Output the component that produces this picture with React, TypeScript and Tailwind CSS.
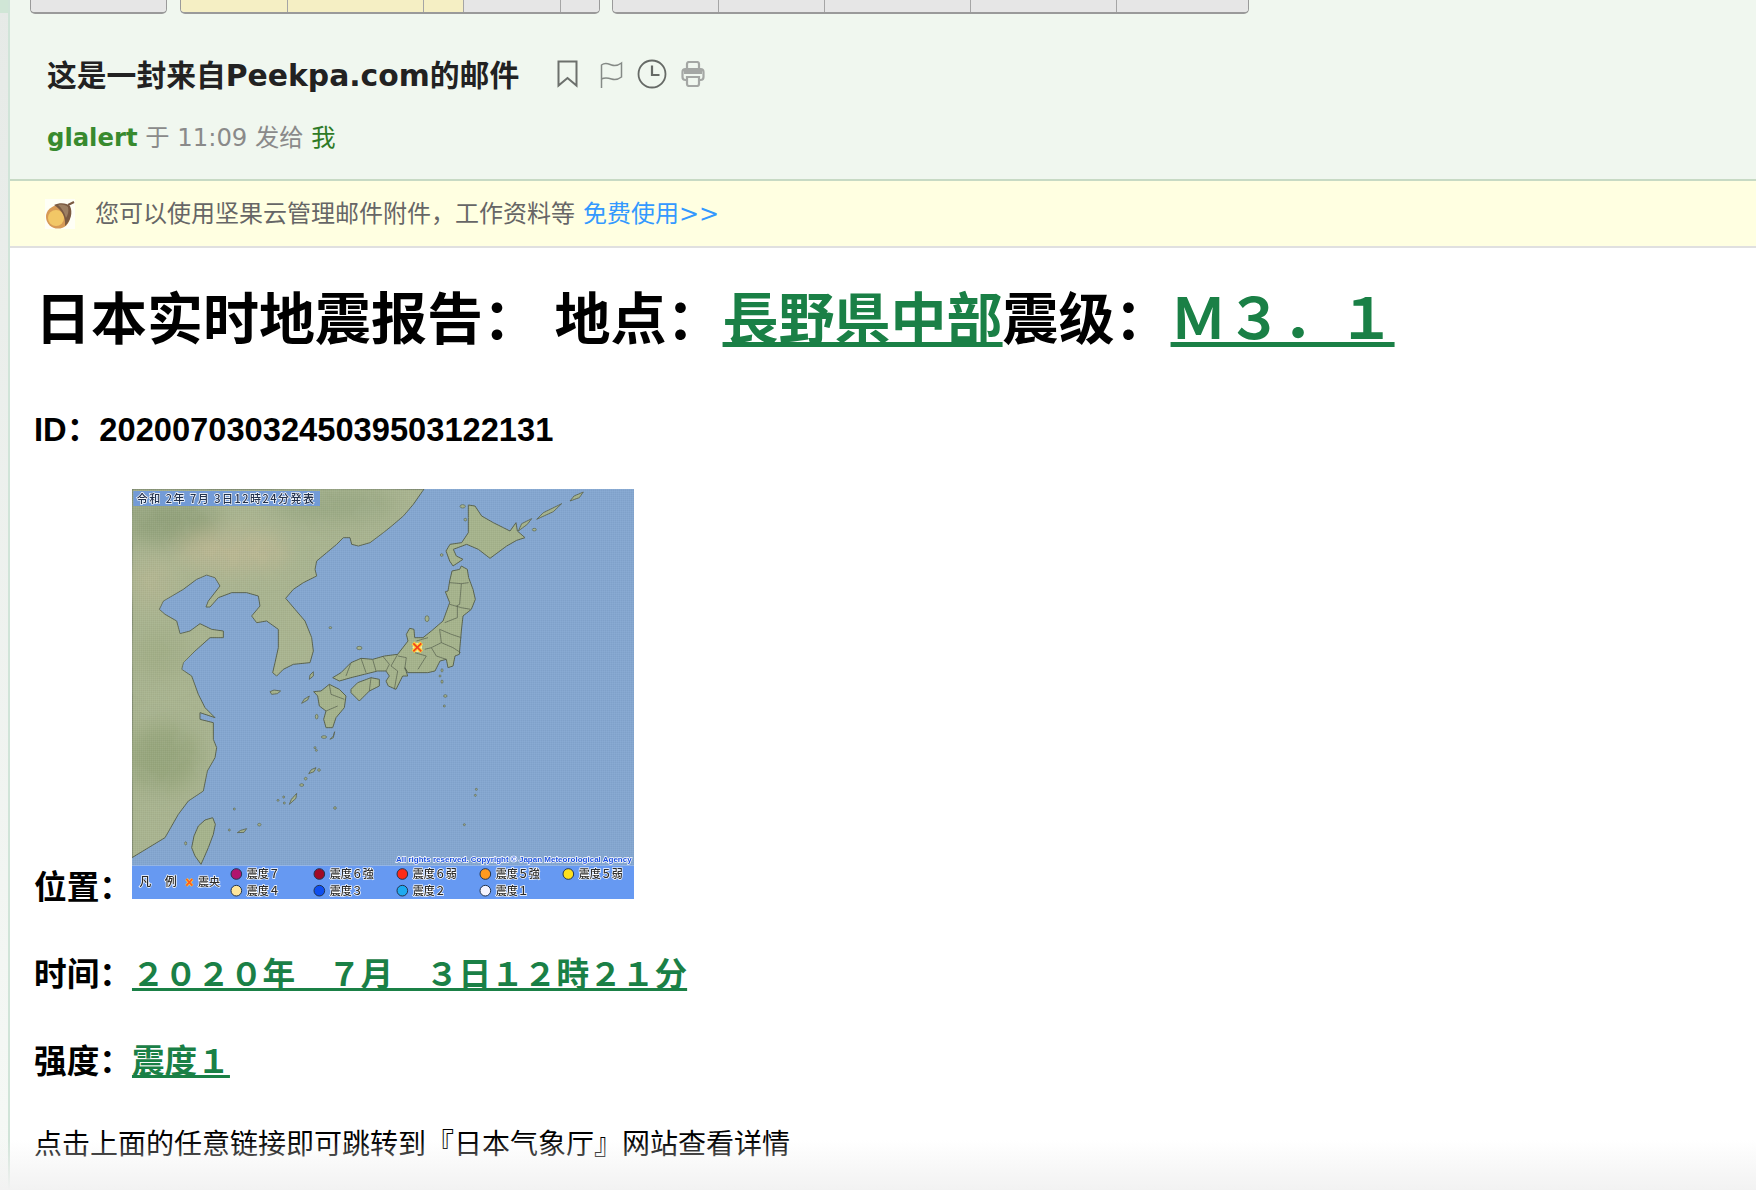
const FONT = "font-['Liberation_Sans','Noto_Sans_CJK_SC',sans-serif]";
const HEAD_FONT = "font-['DejaVu_Sans','Noto_Sans_CJK_SC',sans-serif]";

function Toolbar() {
  const groups = [
    { w: "w-[137px]", cells: [{ w: "flex-1" }] },
    {
      w: "w-[420px]",
      cells: [
        { w: "w-[107px]", on: true },
        { w: "w-[136px]", on: true },
        { w: "w-[40px]", on: true },
        { w: "w-[97px]" },
        { w: "flex-1" },
      ],
    },
    {
      w: "w-[637px] -ml-px",
      cells: [
        { w: "w-[106px]" },
        { w: "w-[106px]" },
        { w: "w-[146px]" },
        { w: "w-[146px]" },
        { w: "flex-1" },
      ],
    },
  ];
  return (
    <div className="flex gap-[13px] pl-[20px] h-[14px]">
      {groups.map((g, i) => (
        <div
          key={i}
          className={`${g.w} flex overflow-hidden rounded-b-[5px] border border-t-0 border-[#9a9a9a] border-b-2`}
        >
          {g.cells.map((c, j) => (
            <div
              key={j}
              className={`${c.w} h-full border-r border-[#a5a5a5] last:border-r-0 ${
                c.on ? "bg-[#f5efc4]" : "bg-[#e6e6e6]"
              }`}
            />
          ))}
        </div>
      ))}
    </div>
  );
}

function HeaderIcons() {
  return (
    <div className="flex items-center ml-[38px] -mt-[3px]">
      <svg width="21" height="28" viewBox="0 0 21 28" fill="none" stroke="#6c706c" strokeWidth="2">
        <path d="M1.500 1.500h18v24l-9-7.500-9 7.500z" />
      </svg>
      <svg className="ml-[22px]" width="23" height="27" viewBox="0 0 23 27" fill="none" stroke="#858a86" strokeWidth="1.500">
        <path d="M1.500 27V4c4-3 7-1 10 0 3 1 6 1 10-2v14c-4 3-7 3-10 2-3-1-6-2-10 0" />
      </svg>
      <svg className="ml-[14px]" width="30" height="30" viewBox="0 0 30 30" fill="none" stroke="#666a66" strokeWidth="1.800">
        <circle cx="15" cy="15" r="13.500" />
        <path d="M15 6.500v9.500h7.500" strokeWidth="2.200" />
      </svg>
      <svg className="ml-[14px]" width="24" height="26" viewBox="0 0 24 26" fill="none" stroke="#a4a7a4" strokeWidth="2.200">
        <path d="M6 8V3a2 2 0 0 1 2-2h8a2 2 0 0 1 2 2v5" />
        <rect x="1.500" y="8" width="21" height="11" rx="3" />
        <rect x="3" y="9" width="18" height="4" fill="#a4a7a4" stroke="none" />
        <path d="M6 16v7a2 2 0 0 0 2 2h8a2 2 0 0 0 2-2v-7z" fill="#f0f7ef" />
      </svg>
    </div>
  );
}

function Acorn() {
  return (
    <svg width="30" height="30" viewBox="0 0 30 30">
      <rect width="30" height="30" fill="#fffff6" />
      <ellipse cx="13" cy="18" rx="12" ry="11.500" fill="#d79a55" />
      <ellipse cx="11" cy="19" rx="8" ry="8" fill="#f2c766" />
      <path d="M9 6c6-3 13-2 16 1 3 6 1 15-5 20 1-9-3-16-11-21z" fill="#7a5a42" />
      <path d="M13 6c4-1 8 0 10 2 1 4 0 8-2 11-2-6-4-10-8-13z" fill="#9c7f62" />
      <path d="M23 6l6-3" stroke="#7a5a42" strokeWidth="2" />
    </svg>
  );
}

const COAST = "#596350";

const LEGEND = [
  { cx: 349, cy: 1179, fill: "#b0146e", label: "震度７" },
  { cx: 598, cy: 1179, fill: "#a00a26", label: "震度６強" },
  { cx: 847, cy: 1179, fill: "#ff2b17", label: "震度６弱" },
  { cx: 1096, cy: 1179, fill: "#ff9a1e", label: "震度５強" },
  { cx: 1345, cy: 1179, fill: "#ffe01e", label: "震度５弱" },
  { cx: 349, cy: 1229, fill: "#ffe69b", label: "震度４" },
  { cx: 598, cy: 1229, fill: "#0f4ff0", label: "震度３" },
  { cx: 847, cy: 1229, fill: "#1eaaf0", label: "震度２" },
  { cx: 1096, cy: 1229, fill: "#f4f4ff", label: "震度１" },
];

const SMALL_ISLANDS = [
  [631, 440, 4, 3], [718, 501, 8, 5], [921, 413, 6, 9], [965, 222, 4, 4], [1036, 116, 4, 4], [1243, 146, 6, 4],
  [1028, 76, 8, 5], [966, 568, 3, 5], [960, 585, 3, 3], [966, 602, 3, 5], [976, 645, 5, 4], [973, 675, 3, 3],
  [597, 867, 4, 4], [557, 893, 4, 4], [545, 912, 6, 4], [491, 948, 3, 3], [474, 958, 3, 3], [493, 966, 3, 3],
  [645, 981, 4, 4], [1069, 925, 3, 3], [1066, 943, 3, 3], [1033, 1031, 3, 3], [418, 1031, 5, 4], [328, 1047, 3, 3],
  [197, 1087, 3, 5], [343, 984, 3, 3], [590, 707, 4, 7], [612, 768, 8, 4], [585, 800, 3, 3], [589, 808, 3, 3],
];

const MAINLAND =
  "36,24 912,24 880,70 850,105 815,135 790,155 750,185 715,195 695,190 690,170 670,170 650,190 620,215 590,240 585,265 590,285 550,305 520,325 497,352 525,385 555,420 575,470 580,510 570,545 520,550 490,565 470,585 458,575 465,545 475,500 475,445 440,420 410,425 395,405 420,375 415,345 380,335 335,335 295,350 270,378 258,378 265,360 300,315 285,290 260,282 230,295 190,325 130,360 118,385 135,400 170,420 180,458 210,450 240,428 275,445 310,450 310,470 270,470 225,510 190,545 185,565 215,585 235,640 255,680 285,710 240,695 240,715 280,725 280,775 290,800 285,830 262,870 250,930 205,960 175,1000 135,1070 36,1130";
const HOKKAIDO =
  "1045,72 1065,75 1085,105 1120,125 1150,140 1170,150 1188,125 1192,150 1215,170 1190,178 1160,195 1110,232 1075,205 1040,190 1000,205 1009,225 1029,235 999,255 989,240 978,210 990,190 1025,185 1045,155 1045,110";
const HONSHU =
  "833,520 864,480 859,460 869,442 882,445 884,470 909,470 934,450 969,420 989,365 976,332 984,330 989,300 996,270 1019,265 1024,255 1042,265 1046,290 1059,325 1066,355 1054,385 1029,405 1024,450 1018,520 1005,525 999,555 984,560 979,535 960,540 945,570 923,575 888,575 863,575 855,560 863,585 848,585 828,625 805,615 798,600 808,585 798,570 773,570 733,580 693,590 658,600 638,590 663,575 693,545 723,532 758,535 793,525";
const SHIKOKU = "693,625 713,605 753,590 778,595 778,615 748,630 718,660 693,635";
const KYUSHU = "581,632 603,630 628,610 658,625 678,645 673,680 648,710 638,740 618,740 611,715 618,690 598,675 593,645";
const TAIWAN = "278,1010 286,1030 280,1060 265,1100 252,1130 243,1150 225,1125 215,1100 222,1065 235,1035 255,1017";

const BORDERS = [
  "989,305 1024,308 1046,305",
  "1024,308 1019,370 1009,375",
  "989,370 1024,380 1052,385",
  "1012,375 1012,410 974,425",
  "959,445 994,460 1024,470",
  "959,445 964,485 999,500 1022,515",
  "934,500 964,485",
  "914,505 934,500 949,525 979,535",
  "924,470 889,480",
  "884,515 919,525 894,565",
  "834,525 859,530 854,565",
  "788,525 808,550 798,570",
  "833,520 813,555 833,570 823,625",
  "723,532 738,575",
  "693,545 678,585",
  "758,535 768,570",
  "628,610 633,640 673,655",
  "618,690 653,675",
  "753,590 748,630",
];

const OTHER_ISLANDS = [
  "450,632 462,627 482,630 472,638 455,640",
  "568,595 570,582 580,572 580,585",
  "545,667 552,655 568,645 563,657",
  "630,775 640,765 644,752 640,770",
  "566,878 574,866 588,860 582,872",
  "508,970 514,955 530,937 528,952",
  "352,1055 362,1048 380,1043 372,1054",
  "1195,150 1205,128 1235,113 1222,130",
  "1250,115 1270,95 1325,68 1300,92",
  "1350,60 1362,45 1390,33 1378,50",
];

function QuakeMap() {
  return (
    <svg width="502" height="410" viewBox="36 24 1506 1230" className="block shrink-0">
      <defs>
        <pattern id="dots" width="6" height="6" patternUnits="userSpaceOnUse">
          <rect width="3" height="3" fill="#ffffff" opacity="0.05" />
          <rect x="3" y="3" width="3" height="3" fill="#000000" opacity="0.03" />
        </pattern>
        <filter id="soft" x="-5%" y="-5%" width="110%" height="110%">
          <feGaussianBlur stdDeviation="1" />
        </filter>
        <filter id="textSoft" x="-5%" y="-20%" width="110%" height="140%">
          <feGaussianBlur stdDeviation="0.800" />
        </filter>
        <filter id="hillBlur" x="-40%" y="-40%" width="180%" height="180%">
          <feGaussianBlur stdDeviation="32" />
        </filter>
        <filter id="terrain" x="0" y="0" width="100%" height="100%">
          <feTurbulence type="fractalNoise" baseFrequency="0.014" numOctaves="4" seed="7" />
          <feColorMatrix values="0 0 0 0 0.40  0 0 0 0 0.46  0 0 0 0 0.30  5 0 0 0 -2.300" />
        </filter>
        <clipPath id="mainlandClip">
          <polygon points={MAINLAND} />
        </clipPath>
      </defs>
      <rect x="36" y="24" width="1506" height="1130" fill="#84a6d0" />

      <g filter="url(#soft)" strokeLinejoin="round">
        {/* 大陆 */}
        <polygon points={MAINLAND} fill="#a9b490" stroke={COAST} strokeWidth="3" />
        <g clipPath="url(#mainlandClip)">
          <g filter="url(#hillBlur)">
            <ellipse cx="150" cy="120" rx="150" ry="70" fill="#93a27c" />
            <ellipse cx="640" cy="70" rx="190" ry="50" fill="#9aa984" />
            <ellipse cx="340" cy="210" rx="170" ry="60" fill="#bab793" />
            <ellipse cx="90" cy="300" rx="70" ry="70" fill="#b3b692" />
            <ellipse cx="130" cy="830" rx="110" ry="100" fill="#97a67d" />
            <ellipse cx="120" cy="520" rx="80" ry="70" fill="#a2ae87" />
          </g>
          <rect x="36" y="24" width="900" height="1110" filter="url(#terrain)" opacity="0.16" />
        </g>

        {/* 日本列岛 */}
        <g fill="#a5b38c" stroke={COAST} strokeWidth="3">
          <polygon points={HOKKAIDO} />
          <polygon points={HONSHU} />
          <polygon points={SHIKOKU} />
          <polygon points={KYUSHU} />
          <polygon points={TAIWAN} />
          {OTHER_ISLANDS.map((p) => (
            <polygon key={p} points={p} strokeWidth="2.500" />
          ))}
          {SMALL_ISLANDS.map(([cx, cy, rx, ry], i) => (
            <ellipse key={i} cx={cx} cy={cy} rx={rx} ry={ry} strokeWidth="2" />
          ))}
        </g>
        {BORDERS.map((p) => (
          <polyline key={p} points={p} fill="none" stroke={COAST} strokeWidth="2.200" />
        ))}
      </g>
      <rect x="36" y="24" width="1506" height="1130" fill="url(#dots)" />

      {/* 震央 */}
      <circle cx="892" cy="499" r="14" fill="#f4eeb0" />
      <path d="M879 486l26 26M905 486l-26 26" stroke="#ffd23a" strokeWidth="12" />
      <path d="M880 487l24 24M904 487l-24 24" stroke="#f2431c" strokeWidth="5" />

      {/* 发表时刻 */}
      <rect x="40" y="30" width="560" height="45" fill="#6b98e4" opacity="0.85" />
      <g filter="url(#textSoft)">
        <text x="50" y="66" fontSize="33" fontWeight="500" textLength="532" fill="#22304e" stroke="#fff" strokeWidth="4" paintOrder="stroke" fontFamily="'Noto Sans CJK JP',sans-serif">
          令和 2年 7月 3日12時24分発表
        </text>
        <text x="828" y="1142" fontSize="24" textLength="707" lengthAdjust="spacingAndGlyphs" fill="#1b4fe0" stroke="#fff" strokeWidth="4" paintOrder="stroke" fontFamily="'Liberation Sans',sans-serif">
          All rights reserved. Copyright © Japan Meteorological Agency
        </text>
      </g>

      {/* 凡例 */}
      <rect x="36" y="1154" width="1506" height="100" fill="#6699f2" />
      <g filter="url(#textSoft)" fontFamily="'Noto Sans CJK JP',sans-serif" fontWeight="500" fill="#2a2a2a" stroke="#fff" strokeWidth="4" paintOrder="stroke">
        <text x="58" y="1216" fontSize="36">凡</text>
        <text x="134" y="1216" fontSize="36">例</text>
        <text x="234" y="1215" fontSize="33">震央</text>
        {LEGEND.map((l) => (
          <text key={l.label} x={l.cx + 31} y={l.cy + 12} fontSize="33">
            {l.label}
          </text>
        ))}
      </g>
      <path d="M199 1194l18 20M217 1194l-18 20" stroke="#ffd23a" strokeWidth="9" />
      <path d="M199 1194l18 20M217 1194l-18 20" stroke="#ff5a1e" strokeWidth="5" />
      {LEGEND.map((l) => (
        <circle key={l.label} cx={l.cx} cy={l.cy} r="16" fill={l.fill} stroke="#23344f" strokeWidth="3" />
      ))}
    </svg>
  );
}

export default function App() {
  return (
    <div className={`${FONT} relative flex h-[1190px] w-full overflow-hidden bg-white`}>
      <div className="w-[10px] shrink-0 border-r-2 border-[#d0e4d8] bg-gradient-to-b from-[#e6eae7] to-[#f6f9f6]">
        <div className="h-[13px] bg-[#d0e6d6]" />
      </div>
      <div className="flex-1 min-w-0">
        <div className={`${HEAD_FONT} h-[181px] bg-[#f0f7ef] border-b-2 border-[#c7dac4]`}>
          <Toolbar />
          <div className="flex items-center pl-[37px] pt-[46px] h-[77px]">
            <span className="text-[29.8px] leading-[34px] font-bold text-[#222]">这是一封来自Peekpa.com的邮件</span>
            <HeaderIcons />
          </div>
          <div className="pl-[37px] pt-[32px] text-[24.3px] leading-[30px] text-[#8a8a8a]">
            <span className="font-bold text-[#388a2e]">glalert</span> 于 11:09 发给{" "}
            <span className="text-[#2e7a26]">我</span>
          </div>
        </div>
        <div className={`${HEAD_FONT} flex items-center h-[67px] bg-[#ffffe1] border-b-2 border-[#e0e0e0] pl-[35px] text-[24px] text-[#666]`}>
          <Acorn />
          <span className="ml-[20px]">您可以使用坚果云管理邮件附件，工作资料等</span>
          <span className="ml-[8px] text-[#3399ff]">免费使用&gt;&gt;</span>
        </div>
        <div className="pl-[24px] pt-[39px] text-black">
          <h1 className="text-[56px] leading-[66px] font-bold whitespace-nowrap pl-[1px]">
            日本实时地震报告：&nbsp;地点：
            <a className="text-[#1a8046] underline">長野県中部</a>
            震级：
            <a className="text-[#1a8046] underline">Ｍ３．１</a>
          </h1>
          <p className="mt-[56px] text-[32.67px] leading-[42px] font-bold">ID：2020070303245039503122131</p>
          <div className="mt-[38px] flex items-end text-[32.67px] font-bold">
            <span className="leading-[42px] mb-[-10px]">位置：</span>
            <QuakeMap />
          </div>
          <p className="mt-[55px] text-[32.67px] leading-[42px] font-bold">
            时间：<a className="text-[#1a8046] underline">２０２０年　７月　３日１２時２１分</a>
          </p>
          <p className="mt-[45px] text-[32.67px] leading-[42px] font-bold">
            强度：<a className="text-[#1a8046] underline">震度１</a>
          </p>
          <p className="mt-[42px] text-[28px] leading-[40px]">点击上面的任意链接即可跳转到『日本气象厅』网站查看详情</p>
        </div>
      </div>
      <div className="pointer-events-none absolute inset-x-0 bottom-0 h-[50px] bg-gradient-to-b from-transparent to-[#f2f2f2]" />
    </div>
  );
}
